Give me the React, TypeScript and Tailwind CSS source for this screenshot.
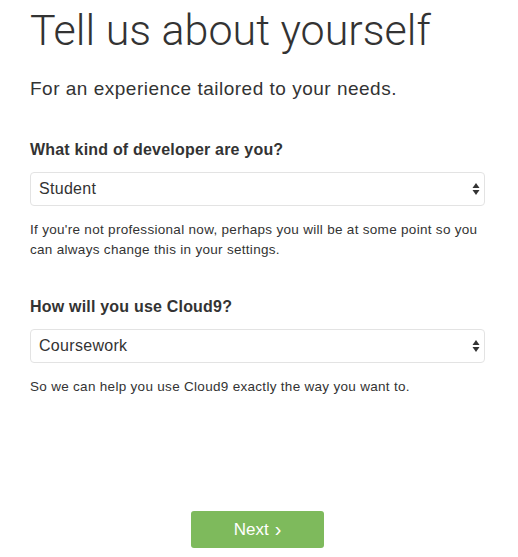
import { useState } from "react";

const Arrows = () => (
    <svg className="pointer-events-none absolute right-[5px] top-1/2 -translate-y-1/2" width="8" height="14" viewBox="0 0 8 14">
        <path d="M4 1 L7.5 6 L0.5 6 Z" fill="#333" />
        <path d="M4 13 L7.5 8 L0.5 8 Z" fill="#333" />
    </svg>
);

const Field = ({ label, value, options, onChange, help }: any) => {
    return (
        <div>
            <label className="block text-[16px] leading-[20px] font-bold tracking-[0.2px] text-[#333]">{label}</label>
            <div className="relative mt-[12.5px]">
                <select
                    value={value}
                    onChange={(e) => onChange(e.target.value)}
                    className="block w-full h-[34px] appearance-none rounded-[4px] border border-[#e3e3e3] bg-white pl-2 pr-6 text-[16px] tracking-[0.3px] text-[#333] outline-none font-['Liberation_Sans',Arial,sans-serif]"
                >
                    {options.map((o: string) => <option key={o} value={o}>{o}</option>)}
                </select>
                <Arrows />
            </div>
            <p className="mt-[13.5px] text-[13.5px] leading-[20px] tracking-[0.3px] text-[#333]">{help}</p>
        </div>
    );
};

const App = () => {
    const [kind, setKind] = useState("Student");
    const [use, setUse] = useState("Coursework");
    return (
        <div className="min-h-[557px] bg-white font-['Liberation_Sans',Arial,sans-serif] text-[#333]">
            <div className="ml-[30px] w-[455px] pt-[6px]">
                <h1 className="text-[43px] leading-[48px] font-light text-[#333] font-['Roboto',sans-serif]">Tell us about yourself</h1>
                <p className="mt-[23px] text-[19px] leading-[24px] tracking-[0.5px]">For an experience tailored to your needs.</p>
                <div className="mt-[38.5px]">
                    <Field
                        label="What kind of developer are you?"
                        value={kind}
                        onChange={setKind}
                        options={["Student", "Professional", "Hobbyist"]}
                        help="If you're not professional now, perhaps you will be at some point so you can always change this in your settings."
                    />
                </div>
                <div className="mt-[37px]">
                    <Field
                        label="How will you use Cloud9?"
                        value={use}
                        onChange={setUse}
                        options={["Coursework", "Personal projects", "Work"]}
                        help="So we can help you use Cloud9 exactly the way you want to."
                    />
                </div>
                <div className="mt-[114.5px] flex justify-center">
                    <button className="flex h-[37px] w-[133px] items-center justify-center gap-[6px] rounded-[3px] bg-[#7eba5c] text-[17px] text-white">
                        Next <span className="text-[20px] leading-none -mt-[2px]">›</span>
                    </button>
                </div>
            </div>
        </div>
    );
};

export default App;
